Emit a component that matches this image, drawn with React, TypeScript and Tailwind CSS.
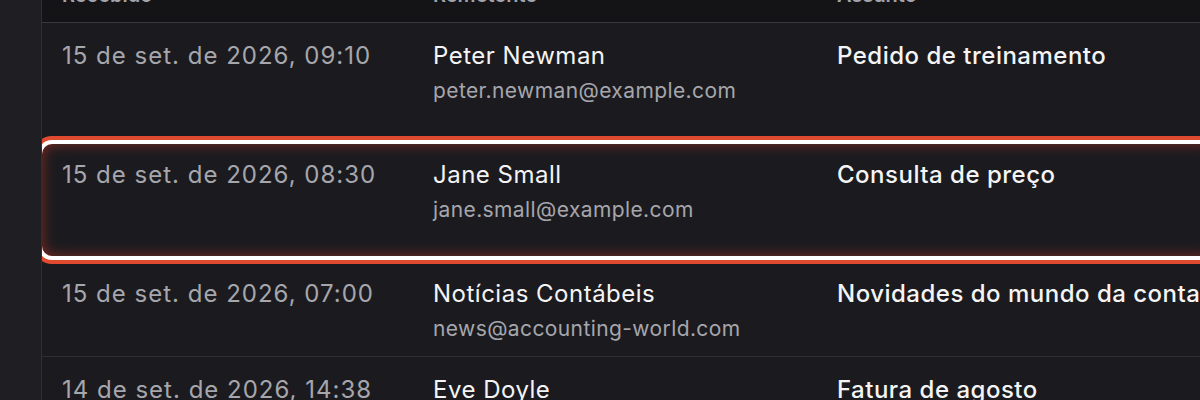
import React from 'react';

interface Message {
  id: number;
  received: string;
  name: string;
  email: string;
  subject: string;
}

const messages: Message[] = [
  { id: 1, received: '15 de set. de 2026, 09:10', name: 'Peter Newman', email: 'peter.newman@example.com', subject: 'Pedido de treinamento' },
  { id: 2, received: '15 de set. de 2026, 08:30', name: 'Jane Small', email: 'jane.small@example.com', subject: 'Consulta de preço' },
  { id: 3, received: '15 de set. de 2026, 07:00', name: 'Notícias Contábeis', email: 'news@accounting-world.com', subject: 'Novidades do mundo da contabilidade' },
  { id: 4, received: '14 de set. de 2026, 14:38', name: 'Eve Doyle', email: 'eve.doyle@example.com', subject: 'Fatura de agosto' },
];

const RowCells: React.FC<{ message: Message }> = ({ message }) => (
  <div className="flex">
    <div className="w-[371px] shrink-0 pl-5 text-[24px] leading-7 tracking-[1px] text-[#a6a6ad]">{message.received}</div>
    <div className="w-[404px] shrink-0 pl-5">
      <div className="text-[24px] leading-7 tracking-[0.5px] text-[#f4f4f5]">{message.name}</div>
      <div className="mt-[7px] text-[21px] leading-7 tracking-[0.4px] text-[#a6a6ad]">{message.email}</div>
    </div>
    <div className="flex-1 whitespace-nowrap pl-5 text-[24px] font-medium leading-7 tracking-[0.5px] text-[#f4f4f5]">{message.subject}</div>
  </div>
);

export default function App() {
  const selectedId = 2;
  const heights: Record<number, string> = { 1: 'h-[119px]', 2: 'h-[119px]', 3: 'h-[96px] border-b border-[#2e2e33]', 4: 'h-[120px]' };

  return (
    <div className="flex h-[400px] w-[1200px] overflow-hidden bg-[#1f1f23]" style={{ fontFamily: 'Inter, "Noto Sans", sans-serif' }}>
      <div className="w-[41px] shrink-0" />
      <div className="min-w-0 flex-1 overflow-hidden border-l border-[#2e2e33] bg-[#1b1b1f]">
        {/* header, scrolled mostly out of view */}
        <div className="flex h-[23px] overflow-hidden border-b border-[#38383d] bg-[#141417] text-[20px] font-semibold leading-7 text-[#a3a3ab]">
          <div className="-mt-[19px] w-[371px] shrink-0 pl-5">Recebido</div>
          <div className="-mt-[19px] w-[404px] shrink-0 pl-5">Remetente</div>
          <div className="-mt-[19px] flex-1 pl-5">Assunto</div>
        </div>

        {messages.map((m) =>
          m.id === selectedId ? (
            <div key={m.id} className={`${heights[m.id]} pt-[2px]`}>
              <div className="-mr-4 h-[112px] rounded-[10px] pt-[17px] shadow-[inset_0_0_14px_rgba(210,60,40,0.55),0_0_0_4px_#ffffff,0_0_0_8px_#e04b2f]">
                <RowCells message={m} />
              </div>
            </div>
          ) : (
            <div key={m.id} className={`${heights[m.id]} pt-[19px]`}>
              <RowCells message={m} />
            </div>
          )
        )}
      </div>
    </div>
  );
}
